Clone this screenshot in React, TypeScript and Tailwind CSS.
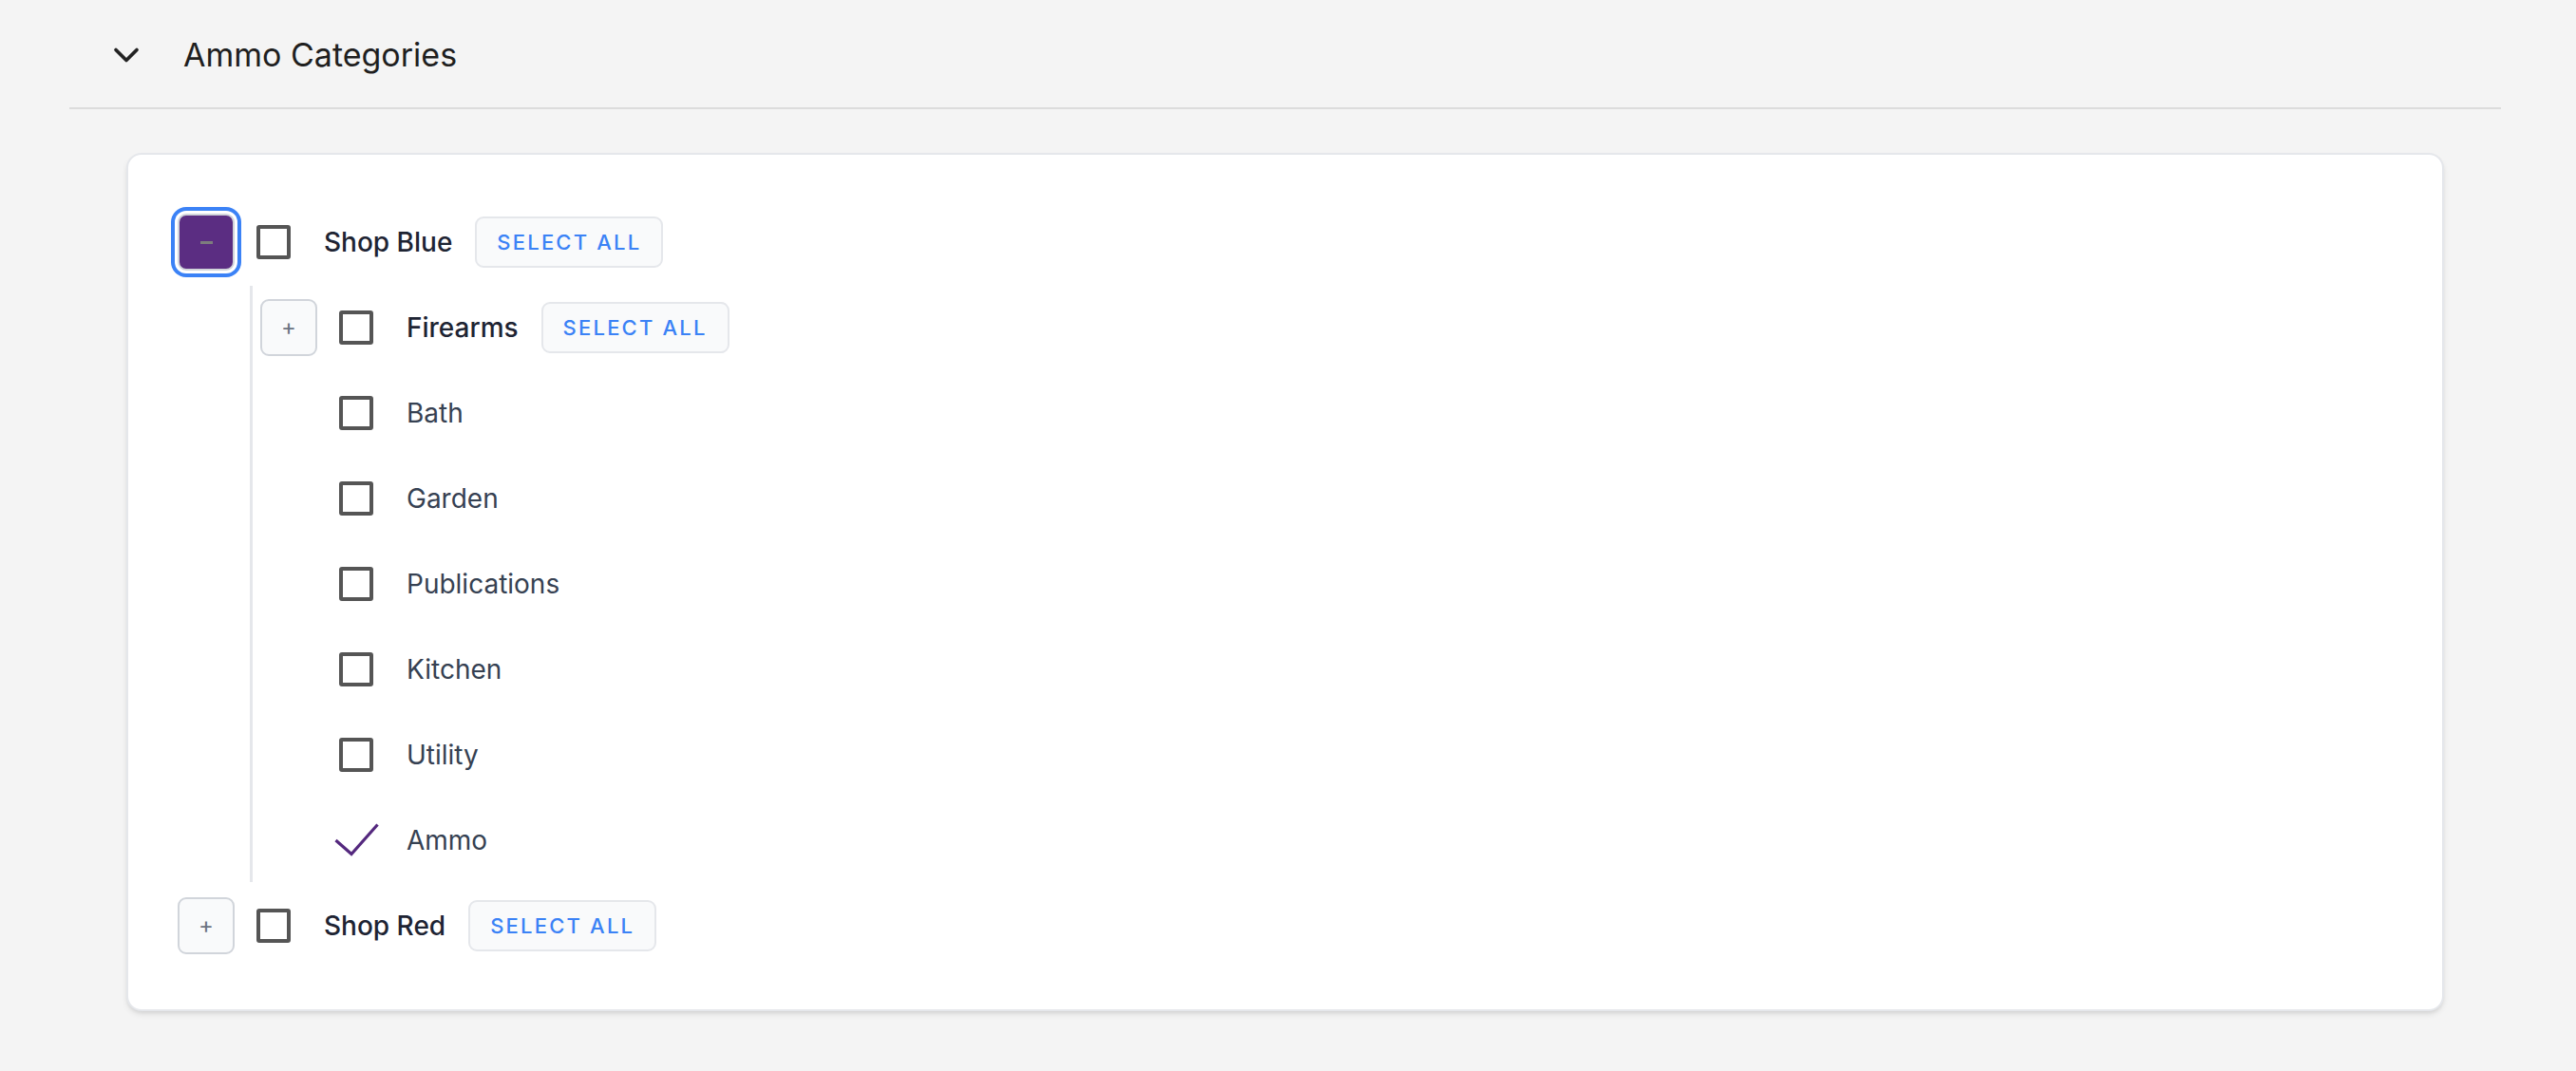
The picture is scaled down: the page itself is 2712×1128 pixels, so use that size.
import React, { useState } from "react";
import { ChevronDown } from "lucide-react";

type Node = { name: string; checked?: boolean; children?: Node[] };

const tree: Node[] = [
  {
    name: "Shop Blue",
    children: [
      { name: "Firearms", children: [{ name: "Rifles" }] },
      { name: "Bath" },
      { name: "Garden" },
      { name: "Publications" },
      { name: "Kitchen" },
      { name: "Utility" },
      { name: "Ammo", checked: true },
    ],
  },
  { name: "Shop Red", children: [{ name: "Pistols" }] },
];

const Box: React.FC<{ checked?: boolean }> = ({ checked }) =>
  checked ? (
    <span className="flex h-[36px] w-[36px] shrink-0 items-center">
      <svg width="47" height="36" viewBox="0 0 47 36" className="-ml-[5px] -mr-[6px] shrink-0">
        <polyline points="1.5,18 18,32.5 45.5,1.5" fill="none" stroke="#54287e" strokeWidth="3.2" />
      </svg>
    </span>
  ) : (
    <span className="block h-[36px] w-[36px] shrink-0 rounded-[3px] border-[4px] border-[#555555] bg-white" />
  );

const SelectAll = () => (
  <button className="h-[54px] rounded-[9px] border-2 border-[#e5e7eb] bg-[#f9fafb] px-[21px] text-[22px] font-medium tracking-[0.1em] text-[#3b82f6]">
    SELECT ALL
  </button>
);

const Row: React.FC<{ node: Node; open: boolean; focused?: boolean; onToggle: () => void; top?: boolean }> = ({
  node,
  open,
  focused,
  onToggle,
  top,
}) => (
  <div className="flex h-[60px] items-center">
    {node.children ? (
      <button
        onClick={onToggle}
        className={
          focused
            ? "flex h-[60px] w-[60px] shrink-0 items-center justify-center rounded-[9px] border-2 border-[#d1d5db] bg-[#5b2d82] text-[22px] text-[#7d7d7d] ring-[4px] ring-[#3b82f6] ring-offset-[3px]"
            : "flex h-[60px] w-[60px] shrink-0 items-center justify-center rounded-[9px] border-2 border-[#d1d5db] bg-[#f9fafb] text-[24px] text-[#6b7280]"
        }
      >
        {open ? <span className="block h-[3px] w-[13px] bg-[#7d7d7d]" /> : "+"}
      </button>
    ) : (
      <span className="w-[60px] shrink-0" />
    )}
    <span className="ml-[23px]">
      <Box checked={node.checked} />
    </span>
    <span
      className={
        node.children
          ? "ml-[35px] mr-[24px] text-[28px] font-medium text-[#1e2433]"
          : "ml-[35px] text-[28px] text-[#364152]"
      }
    >
      {node.name}
    </span>
    {node.children && top !== undefined && <SelectAll />}
  </div>
);

const Branch: React.FC<{ node: Node; defaultOpen?: boolean; focused?: boolean }> = ({ node, defaultOpen, focused }) => {
  const [open, setOpen] = useState(!!defaultOpen);
  return (
    <div className="flex flex-col gap-[16px]">
      <Row node={node} open={open} focused={focused} top onToggle={() => setOpen(!open)} />
      {open && node.children && (
        <div className="ml-[76px] flex flex-col gap-[30px] border-l-[3px] border-[#e5e7eb] py-[14px] pl-[8px]">
          {node.children.map((c) =>
            c.children ? (
              <Branch key={c.name} node={c} />
            ) : (
              <Row key={c.name} node={c} open={false} onToggle={() => {}} />
            )
          )}
        </div>
      )}
    </div>
  );
};

export default function App() {
  return (
    <div className="min-h-screen bg-[#f4f4f4] font-['Inter','Liberation_Sans',sans-serif]">
      <div className="ml-[73px] mr-[79px]">
        <div className="flex h-[115px] items-center border-b-2 border-[#dcdcdc] pl-[38px] pt-[2px]">
          <ChevronDown size={44} strokeWidth={2} color="#222222" />
          <span className="ml-[38px] text-[34px] text-[#1f1f1f]">Ammo Categories</span>
        </div>
        <div className="mx-[60px] mt-[46px] rounded-[16px] border-2 border-[#e5e7eb] bg-white pb-[58px] pl-[52px] pt-[62px] shadow-md">
          <div className="flex flex-col gap-[16px]">
            <Branch node={tree[0]} defaultOpen focused />
            <Branch node={tree[1]} />
          </div>
        </div>
      </div>
    </div>
  );
}
